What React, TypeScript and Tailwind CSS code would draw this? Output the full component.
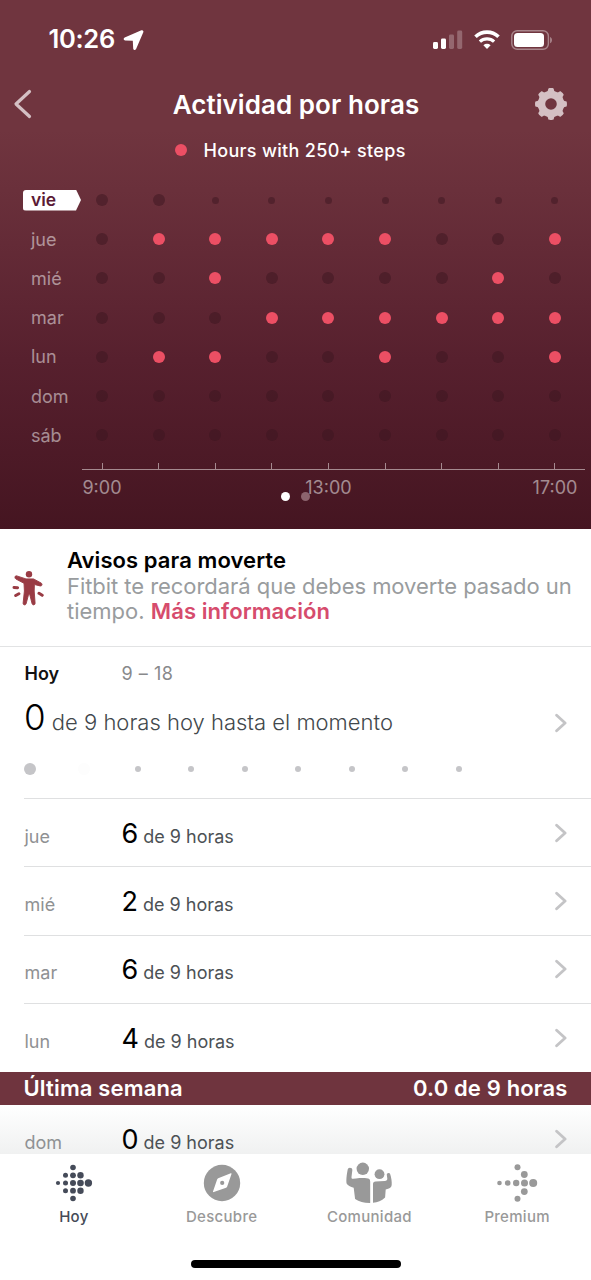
import React from 'react';

type Mark = 'off' | 'on' | 'small';

interface DayRow {
    day: string;
    marks: Mark[];
}

interface HistoryItem {
    day: string;
    hours: number;
}

// o = inactive hour, x = active hour, . = hour still to come
const parseMarks = (pattern: string): Mark[] =>
    pattern.split('').map((c) => (c === 'x' ? 'on' : c === '.' ? 'small' : 'off'));

const chartRows: DayRow[] = [
    { day: 'vie', marks: parseMarks('oo.......') },
    { day: 'jue', marks: parseMarks('oxxxxxoox') },
    { day: 'mié', marks: parseMarks('ooxooooxo') },
    { day: 'mar', marks: parseMarks('oooxxxxxx') },
    { day: 'lun', marks: parseMarks('oxxooxoox') },
    { day: 'dom', marks: parseMarks('ooooooooo') },
    { day: 'sáb', marks: parseMarks('ooooooooo') },
];

const axisLabels = ['9:00', '', '', '', '13:00', '', '', '', '17:00'];

const history: HistoryItem[] = [
    { day: 'jue', hours: 6 },
    { day: 'mié', hours: 2 },
    { day: 'mar', hours: 6 },
    { day: 'lun', hours: 4 },
];

const markClasses: Record<Mark, string> = {
    off: 'w-3 h-3 bg-[#3b1620]/50',
    on: 'w-3 h-3 bg-[#ec4f64]',
    small: 'w-[7px] h-[7px] bg-[#3b1620]/50',
};

const Chevron: React.FC = () => (
    <svg className="w-3 h-5 shrink-0" viewBox="0 0 12 20" fill="none" stroke="#c4c4c6" strokeWidth="2.8" strokeLinecap="round" strokeLinejoin="round">
        <path d="M1.600 2.200l8.500 7.800-8.500 7.800" />
    </svg>
);

const StatusBar: React.FC = () => (
    <div className="flex h-[78px] items-center justify-between pl-[48.500px] pr-[38.500px] pt-px">
        <div className="flex items-center">
            <span className="w-[74px] text-[25.5px] font-semibold tracking-[-0.3px]">10:26</span>
            <svg className="w-[22px] h-[22px]" viewBox="0 0 22 22" fill="#fff">
                <path d="M18.400 1.300L1.700 8.600c-1.600.8-1.300 2.700.4 2.800l7.700.4.4 7.600c.1 1.700 2.100 2.100 2.900.5L20.300 3.200c.6-1.300-.6-2.500-1.900-1.900z" />
            </svg>
        </div>
        <div className="flex items-center">
            <svg className="w-[30px] h-5" viewBox="0 0 30 20" fill="#fff">
                <rect x="0" y="12" width="5" height="7" rx="1.400" />
                <rect x="8" y="8.500" width="5" height="10.500" rx="1.400" />
                <rect x="16" y="4.500" width="5" height="14.500" rx="1.400" opacity=".25" />
                <rect x="24.200" y=".5" width="5" height="18.500" rx="1.400" opacity=".25" />
            </svg>
            <svg className="ml-[11px] w-[26px] h-5" viewBox="0 0 26 20" fill="none" stroke="#fff" strokeWidth="3.600">
                <path d="M1.500 6.800a16.500 16.500 0 0 1 23 0" />
                <path d="M5.900 11.700a10.200 10.200 0 0 1 14.200 0" strokeWidth="3.200" />
                <path d="M13 19l-3.600-3.700a5.200 5.200 0 0 1 7.200 0z" fill="#fff" stroke="none" />
            </svg>
            <svg className="ml-[11px] w-[42px] h-5" viewBox="0 0 42 20">
                <rect x=".8" y=".7" width="36.600" height="18.600" rx="5.500" fill="none" stroke="#fff" strokeOpacity=".4" strokeWidth="1.400" />
                <rect x="3" y="2.900" width="30" height="14.200" rx="3.500" fill="#fff" />
                <path d="M39.200 7c2.200.8 2.200 5.400 0 6.200z" fill="#fff" opacity=".45" />
            </svg>
        </div>
    </div>
);

const GearIcon: React.FC = () => (
    <svg className="w-8 h-8" viewBox="0 0 32 32" fill="#d4c0c4">
        <circle cx="16" cy="16" r="9.500" fill="none" stroke="#d4c0c4" strokeWidth="7.400" />
        {[0, 45, 90, 135, 180, 225, 270, 315].map((angle) => (
            <path key={angle} d="M11.200 4.500c2-.8 1.700-3.300 2.300-4 .4-.6 4.600-.6 5 0 .6.700.3 3.200 2.300 4z" transform={`rotate(${angle} 16 16)`} />
        ))}
    </svg>
);

const HourChart: React.FC = () => (
    <div className="pt-[10.500px]">
        {chartRows.map(({ day, marks }, i) => (
            <div key={day} className="flex h-[39.200px] items-center">
                <div className="w-[73.700px] shrink-0 pl-[23px]">
                    {i === 0 ? (
                        <div className="flex h-[21px] w-[58px] items-center rounded-l-[3px] bg-white pl-2 text-[17.500px] font-semibold text-[#5b1a35] [clip-path:polygon(0_0,53px_0,58px_50%,53px_100%,0_100%)]">
                            {day}
                        </div>
                    ) : (
                        <span className="pl-2 text-[18px] text-white/50">{day}</span>
                    )}
                </div>
                <div className="grid w-[509.600px] shrink-0 grid-cols-9">
                    {marks.map((mark, j) => (
                        <div key={j} className="flex items-center justify-center">
                            <div className={`rounded-full ${markClasses[mark]}`} />
                        </div>
                    ))}
                </div>
            </div>
        ))}
        <div className="mt-[8px] ml-[82px] mr-[6px] h-[7px] border-b border-[#a58a90]">
            <div className="ml-[-8.300px] grid w-[509.600px] grid-cols-9">
                {axisLabels.map((_, i) => (
                    <div key={i} className="mx-auto h-[6px] w-px bg-[#a58a90]" />
                ))}
            </div>
        </div>
        <div className="ml-[73.700px] mt-[5px] grid w-[509.600px] grid-cols-9 text-[18px] leading-[26px] text-white/50">
            {axisLabels.map((label, i) => (
                <div key={i} className="flex justify-center whitespace-nowrap">{label}</div>
            ))}
        </div>
    </div>
);

const Header: React.FC = () => (
    <header className="relative h-[529px] shrink-0 bg-[linear-gradient(180deg,#70353f_0px,#70353f_130px,#6a303b_190px,#57202e_360px,#451521_529px)] text-white">
        <StatusBar />
        <div className="flex h-[52px] items-center justify-between pl-[13px] pr-6">
            <svg className="w-[19px] h-[30px]" viewBox="0 0 19 30" fill="none" stroke="#d4c0c4" strokeWidth="3.200" strokeLinecap="round" strokeLinejoin="round">
                <path d="M16.500 2.500L3 15l13.500 12.500" />
            </svg>
            <h1 className="pl-[25px] text-[26px] font-semibold tracking-[0.050px]">Actividad por horas</h1>
            <GearIcon />
        </div>
        <div className="flex h-10 items-center pl-[174.500px] text-[18px] font-medium tracking-[0.320px]">
            <span className="mr-[17px] h-3 w-3 rounded-full bg-[#ec4f64]" />
            Hours with 250+ steps
        </div>
        <HourChart />
        <div className="absolute left-[281px] top-[492px] flex gap-[10.500px]">
            <span className="h-[9px] w-[9px] rounded-full bg-white" />
            <span className="h-[9px] w-[9px] rounded-full bg-[#8c646e]" />
        </div>
    </header>
);

const MoveNotice: React.FC = () => (
    <section className="flex h-[118px] shrink-0 items-start border-b border-[#e2e3e4] pt-[19px]">
        <svg className="ml-[12px] mt-[23px] w-8 h-[35px]" viewBox="0 0 32 35" fill="#993b44">
            <circle cx="17" cy="3.300" r="3.200" />
            <path d="M4.800 4.900L14 7.900h7.500l7.600 4.100c1.700 1 .9 3.500-1.200 2.900L22.400 13.500l-.2 6.500.9 12.300c.1 1.800-2.500 2.200-3 .5L17.600 23h-.9l-2.600 9.800c-.5 1.700-3.100 1.300-3-.5l1.300-12.300-.4-7.700-8.100-4.300c-1.700-1-.9-3.700.9-3.100z" stroke="#993b44" strokeWidth=".9" strokeLinejoin="round" />
            <path d="M2 16.500l3.600.2M3.700 24.500l3.200-1.800M27 22.300l3.200 2" fill="none" stroke="#993b44" strokeWidth="3" strokeLinecap="round" />
        </svg>
        <div className="ml-[23px] whitespace-nowrap text-[22px] leading-[25.500px]">
            <h2 className="font-semibold tracking-[0.080px] text-black">Avisos para moverte</h2>
            <p className="tracking-[-0.050px] text-[#999c9e]">Fitbit te recordará que debes moverte pasado un</p>
            <p className="text-[#999c9e]">
                tiempo. <span className="font-semibold tracking-[0.080px] text-[#d64c6d]">Más información</span>
            </p>
        </div>
    </section>
);

const TodaySummary: React.FC = () => (
    <section className="ml-[24px] h-[152px] shrink-0 border-b border-[#dfe0e1]">
        <div className="flex h-[52px] items-center pl-[0.500px] text-[18px]">
            <span className="w-[97px] font-semibold text-[#111]">Hoy</span>
            <span className="tracking-[0.550px] text-[#88898b]">9 – 18</span>
        </div>
        <div className="flex h-[48px] items-center justify-between pr-[24px]">
            <p className="mt-[-8px] whitespace-nowrap text-[22px] font-light leading-[48px] text-[#42484c]">
                <span className="text-[35px] font-light text-black">0</span> de 9 horas hoy hasta el momento
            </p>
            <Chevron />
        </div>
        <div className="ml-[-20.300px] mt-[16px] grid w-[482px] grid-cols-9">
            {chartRows[0].marks.map((mark, i) => (
                <div key={i} className="flex h-3 items-center justify-center">
                    {i === 0 && <span className="h-3 w-3 rounded-full bg-[#c5c5c8]" />}
                    {i === 1 && <span className="h-3 w-3 rounded-full bg-[#fdfdfd]" />}
                    {mark === 'small' && <span className="h-[6px] w-[6px] rounded-full bg-[#c5c5c8]" />}
                </div>
            ))}
        </div>
    </section>
);

const HistoryRow: React.FC<HistoryItem> = ({ day, hours }) => (
    <div className="flex h-full items-center pr-[24px]">
        <div className="mt-px flex grow items-baseline whitespace-nowrap pl-[0.500px] text-[18px] leading-none">
            <span className="w-[97px] text-[#8f9193]">{day}</span>
            <span className="text-[27px] leading-none text-black">{hours}</span>
            <span className="ml-[5px] text-[#4c5155]">de 9 horas</span>
        </div>
        <Chevron />
    </div>
);

const TodayIcon: React.FC = () => (
    <svg className="w-10 h-10" viewBox="0 0 40 40" fill="#454b59">
        <circle cx="19" cy="4.500" r="2.800" />
        <circle cx="11.500" cy="12.300" r="2.500" />
        <circle cx="19" cy="12.300" r="2.900" />
        <circle cx="26.500" cy="12.300" r="3.200" />
        <circle cx="4" cy="20" r="2.100" />
        <circle cx="11.500" cy="20" r="2.500" />
        <circle cx="19" cy="20" r="3" />
        <circle cx="26.500" cy="20" r="3.300" />
        <circle cx="34.400" cy="20" r="3.700" />
        <circle cx="11.500" cy="27.700" r="2.500" />
        <circle cx="19" cy="27.700" r="2.900" />
        <circle cx="26.500" cy="27.700" r="3.200" />
        <circle cx="19" cy="35.500" r="2.800" />
    </svg>
);

const DiscoverIcon: React.FC = () => (
    <svg className="w-10 h-10" viewBox="0 0 40 40" fill="#999">
        <circle cx="20" cy="20" r="18.200" />
        <path d="M28.800 10.300L16.200 15.300c-.5.200-.8.500-1 1L11 28.400c-.2.700.2 1 .8.700l12.300-4.400c.5-.2.800-.5 1-1L29.500 11c.2-.6-.1-.9-.7-.7z" fill="#fff" />
        <circle cx="20.200" cy="19.900" r="2.100" />
    </svg>
);

const CommunityIcon: React.FC = () => (
    <svg className="w-[46px] h-[42px]" viewBox="0 0 46 42" fill="#999">
        <circle cx="16.800" cy="6.800" r="6.200" />
        <circle cx="33.500" cy="12.200" r="4.900" />
        <path d="M3.800 5.700c1.800 0 2.700 1 2.500 2.800L5.500 14.900c-.1 1.200.3 2 1.500 1.900l3-.3c3.500-.4 7-.5 10.500-.3 2.500.1 3.700.9 3.700 3.200v21.700c-6.200.1-10.900-1.300-15.100-4L7.700 25.800C4.600 25 1.400 23.300.6 21.600-.1 18.500.8 12 1.700 7.600c.3-1.200 1-1.900 2.100-1.900z" />
        <path d="M27 40.800V22c0-1.500.9-2.400 2.500-2.500l9.300-.5c1.700-.1 2.700-.8 2.500-2.400l-.5-3.600c-.2-2.300 2.800-2.700 3.500-.6 1 3.200 1.700 7.500 1.400 10.600-.2 2.500-2.500 3.800-6 4.500l-.6 8.100c-3.500 3.300-7.500 5-12.100 5.200z" />
    </svg>
);

const PremiumIcon: React.FC = () => (
    <svg className="w-[42px] h-10" viewBox="0 0 42 40" fill="#999">
        <circle cx="21.500" cy="4.300" r="3" />
        <circle cx="28.300" cy="11.500" r="3.400" />
        <circle cx="3.500" cy="20" r="2.300" />
        <circle cx="11.700" cy="20" r="2.800" />
        <circle cx="20.200" cy="20" r="3.200" />
        <circle cx="28.500" cy="20" r="3.500" />
        <circle cx="37.200" cy="20" r="4" />
        <circle cx="28.300" cy="28.600" r="3.400" />
        <circle cx="21.500" cy="35.700" r="3" />
    </svg>
);

const tabs = [
    { label: 'Hoy', Icon: TodayIcon, active: true },
    { label: 'Descubre', Icon: DiscoverIcon, active: false },
    { label: 'Comunidad', Icon: CommunityIcon, active: false },
    { label: 'Premium', Icon: PremiumIcon, active: false },
];

const TabBar: React.FC = () => (
    <nav className="flex h-[126px] shrink-0 flex-col items-center bg-white">
        <div className="grid w-full grid-cols-4">
            {tabs.map(({ label, Icon, active }) => (
                <div key={label} className="flex flex-col items-center pt-2">
                    <div className="flex h-[42px] items-center">
                        <Icon />
                    </div>
                    <span className={`text-[15px] leading-[26px] font-medium tracking-[0.3px] ${active ? 'text-[#454b57]' : 'text-[#999]'}`}>{label}</span>
                </div>
            ))}
        </div>
        <div className="ml-px mt-[30px] h-[8px] w-[210px] rounded-full bg-black" />
    </nav>
);

const App: React.FC = () => {
    return (
        <main className="flex h-[1280px] w-[591px] flex-col overflow-hidden bg-white font-['Inter',sans-serif]">
            <Header />
            <MoveNotice />
            <TodaySummary />
            {history.map((item, i) => (
                <div key={item.day} className={`ml-[24px] h-[68.250px] shrink-0 ${i < 3 ? 'border-b border-[#dfe0e1]' : ''}`}>
                    <HistoryRow {...item} />
                </div>
            ))}
            <div className="flex h-[33px] shrink-0 items-center justify-between bg-[#6f343e] px-[23.500px] text-[22px] font-semibold tracking-[0.150px] text-white">
                <span>Última semana</span>
                <span>0.0 de 9 horas</span>
            </div>
            <div className="h-[49px] shrink-0 bg-gradient-to-b from-white to-[#f0f1f1] pl-[24px]">
                <div className="h-[68px]">
                    <HistoryRow day="dom" hours={0} />
                </div>
            </div>
            <TabBar />
        </main>
    );
};

export default App;
